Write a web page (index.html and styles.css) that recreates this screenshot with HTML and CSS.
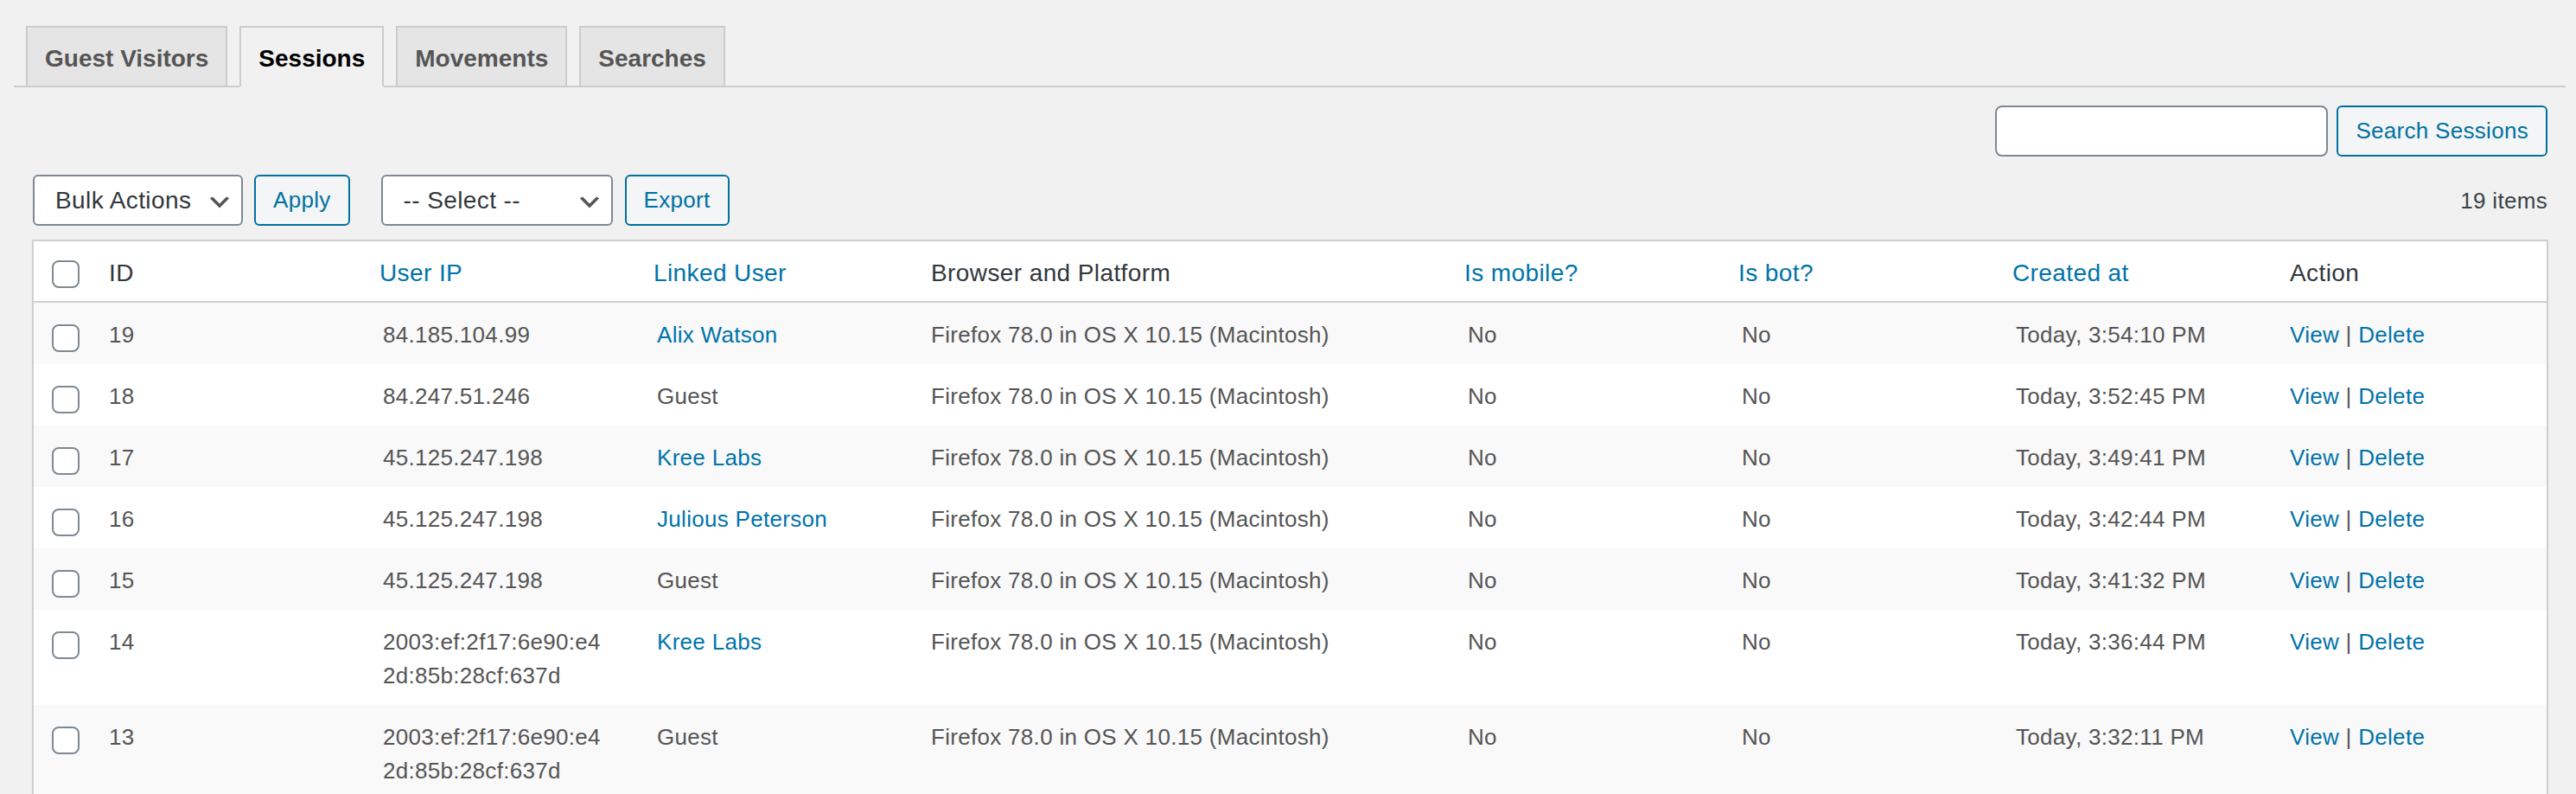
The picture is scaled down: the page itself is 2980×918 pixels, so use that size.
FILE: index.html
```html
<!DOCTYPE html>
<html lang="en">
<head>
<meta charset="utf-8">
<title>Sessions</title>
<link rel="stylesheet" href="styles.css">
</head>
<body>
<div class="page">
  <nav class="tabs">
    <a class="tab">Guest Visitors</a>
    <a class="tab tab-active">Sessions</a>
    <a class="tab">Movements</a>
    <a class="tab">Searches</a>
  </nav>

  <div class="content">
    <div class="search">
      <input class="search-input" type="text">
      <button class="btn">Search Sessions</button>
    </div>

    <div class="toolbar">
      <div class="select select-bulk">
        <span>Bulk Actions</span>
        <svg class="chev" viewBox="0 0 20 20" width="32" height="32"><path d="M5 6l5 5 5-5 2 1-7 7-7-7 2-1z" fill="#555"/></svg>
      </div>
      <button class="btn btn-apply">Apply</button>
      <div class="select select-filter">
        <span>-- Select --</span>
        <svg class="chev" viewBox="0 0 20 20" width="32" height="32"><path d="M5 6l5 5 5-5 2 1-7 7-7-7 2-1z" fill="#555"/></svg>
      </div>
      <button class="btn btn-export">Export</button>
      <span class="count">19 items</span>
    </div>

    <table class="list">
      <colgroup>
        <col class="c-check">
        <col class="c-std">
        <col class="c-std">
        <col class="c-std">
        <col>
        <col class="c-std">
        <col class="c-std">
        <col class="c-std">
        <col class="c-std">
      </colgroup>
      <thead>
        <tr>
          <th class="check"><input type="checkbox" class="cb"></th>
          <th>ID</th>
          <th class="sortable"><a>User IP</a></th>
          <th class="sortable"><a>Linked User</a></th>
          <th>Browser and Platform</th>
          <th class="sortable"><a>Is mobile?</a></th>
          <th class="sortable"><a>Is bot?</a></th>
          <th class="sortable"><a>Created at</a></th>
          <th>Action</th>
        </tr>
      </thead>
      <tbody>
        <tr>
          <td class="check"><input type="checkbox" class="cb"></td>
          <td>19</td><td>84.185.104.99</td><td><a class="link">Alix Watson</a></td>
          <td>Firefox 78.0 in OS X 10.15 (Macintosh)</td><td>No</td><td>No</td>
          <td>Today, 3:54:10 PM</td><td><a class="link">View</a> | <a class="link">Delete</a></td>
        </tr>
        <tr>
          <td class="check"><input type="checkbox" class="cb"></td>
          <td>18</td><td>84.247.51.246</td><td>Guest</td>
          <td>Firefox 78.0 in OS X 10.15 (Macintosh)</td><td>No</td><td>No</td>
          <td>Today, 3:52:45 PM</td><td><a class="link">View</a> | <a class="link">Delete</a></td>
        </tr>
        <tr>
          <td class="check"><input type="checkbox" class="cb"></td>
          <td>17</td><td>45.125.247.198</td><td><a class="link">Kree Labs</a></td>
          <td>Firefox 78.0 in OS X 10.15 (Macintosh)</td><td>No</td><td>No</td>
          <td>Today, 3:49:41 PM</td><td><a class="link">View</a> | <a class="link">Delete</a></td>
        </tr>
        <tr>
          <td class="check"><input type="checkbox" class="cb"></td>
          <td>16</td><td>45.125.247.198</td><td><a class="link">Julious Peterson</a></td>
          <td>Firefox 78.0 in OS X 10.15 (Macintosh)</td><td>No</td><td>No</td>
          <td>Today, 3:42:44 PM</td><td><a class="link">View</a> | <a class="link">Delete</a></td>
        </tr>
        <tr>
          <td class="check"><input type="checkbox" class="cb"></td>
          <td>15</td><td>45.125.247.198</td><td>Guest</td>
          <td>Firefox 78.0 in OS X 10.15 (Macintosh)</td><td>No</td><td>No</td>
          <td>Today, 3:41:32 PM</td><td><a class="link">View</a> | <a class="link">Delete</a></td>
        </tr>
        <tr>
          <td class="check"><input type="checkbox" class="cb"></td>
          <td>14</td><td>2003:ef:2f17:6e90:e4<br>2d:85b:28cf:637d</td><td><a class="link">Kree Labs</a></td>
          <td>Firefox 78.0 in OS X 10.15 (Macintosh)</td><td>No</td><td>No</td>
          <td>Today, 3:36:44 PM</td><td><a class="link">View</a> | <a class="link">Delete</a></td>
        </tr>
        <tr>
          <td class="check"><input type="checkbox" class="cb"></td>
          <td>13</td><td>2003:ef:2f17:6e90:e4<br>2d:85b:28cf:637d</td><td>Guest</td>
          <td>Firefox 78.0 in OS X 10.15 (Macintosh)</td><td>No</td><td>No</td>
          <td>Today, 3:32:11 PM</td><td><a class="link">View</a> | <a class="link">Delete</a></td>
        </tr>
      </tbody>
    </table>
  </div>
</div>
</body>
</html>
```

FILE: styles.css
```css
html, body {
  margin: 0;
  padding: 0;
  background: #f1f1f1;
}
body {
  font-family: "Liberation Sans", Arial, sans-serif;
  font-size: 26px;
  color: #444;
  overflow: hidden;
}
.page {
  padding: 30px 12px 0 16px;
}

/* tabs */
.tabs {
  display: flex;
  gap: 14px;
  padding-left: 14px;
  border-bottom: 2px solid #ccc;
}
.tab {
  display: block;
  border: 2px solid #ccc;
  border-bottom: 0;
  background: #e5e5e5;
  color: #555;
  font-size: 28px;
  font-weight: 700;
  line-height: 48px;
  padding: 12px 20px 7px;
  text-decoration: none;
}
.tab-active {
  background: #f1f1f1;
  color: #000;
  border-bottom: 2px solid #f1f1f1;
  margin-bottom: -2px;
}

/* content */
.content {
  padding: 0 20px 0 21px;
}
.search {
  display: flex;
  justify-content: flex-end;
  gap: 10px;
  margin-top: 21px;
  padding-right: 1px;
}
.search-input {
  box-sizing: border-box;
  width: 385px;
  height: 59px;
  margin: 0;
  border: 2px solid #7e8993;
  border-radius: 8px;
  background: #fff;
}
.btn {
  box-sizing: border-box;
  height: 59px;
  margin: 0;
  padding: 0 20px;
  border: 2px solid #0071a1;
  border-radius: 6px;
  background: #f3f5f6;
  color: #0071a1;
  font-family: "Liberation Sans", Arial, sans-serif;
  font-size: 26px;
  letter-spacing: 0.3px;
  line-height: 55px;
}

.toolbar {
  display: flex;
  align-items: center;
  margin-top: 21px;
  height: 59px;
  padding-left: 1px;
}
.select {
  box-sizing: border-box;
  height: 59px;
  display: flex;
  align-items: center;
  justify-content: space-between;
  padding-left: 24px;
  padding-right: 9px;
  border: 2px solid #7e8993;
  border-radius: 6px;
  background: #fff;
  color: #32373c;
  font-size: 28px;
  letter-spacing: 0.4px;
}
.select span {
  padding-top: 1px;
}
.chev {
  display: block;
  margin-top: 4px;
}
.select-bulk {
  width: 243px;
}
.btn-apply {
  margin-left: 13px;
}
.select-filter {
  width: 268px;
  margin-left: 36px;
}
.btn-export {
  margin-left: 14px;
}
.count {
  margin-left: auto;
  padding-top: 2px;
  padding-right: 1px;
  color: #3c434a;
  letter-spacing: 0.3px;
}

/* table */
.list {
  width: 100%;
  margin-top: 16px;
  table-layout: fixed;
  border-collapse: separate;
  border-spacing: 0;
  border: 2px solid #ccd0d4;
  background: #fff;
  box-shadow: 0 2px 2px rgba(0, 0, 0, 0.04);
}
.c-check { width: 67px; }
.c-std { width: 317px; }

.list th {
  text-align: left;
  font-weight: 400;
  font-size: 28px;
  line-height: 37px;
  letter-spacing: 0.4px;
  color: #32373c;
  padding: 18px 20px 14px;
  border-bottom: 2px solid #ccd0d4;
  vertical-align: top;
}
.list th.sortable {
  padding-left: 16px;
}
.list th a {
  color: #0073aa;
}
.list th.check {
  padding: 22px 0 0 21px;
}

.list td {
  font-size: 26px;
  line-height: 39px;
  letter-spacing: 0.3px;
  color: #555;
  padding: 18px 20px 14px;
  vertical-align: top;
}
.list td.check {
  padding: 25px 0 0 21px;
}
.list tbody tr:nth-child(odd) {
  background: #f9f9f9;
}
.link {
  color: #0073aa;
}

.cb {
  -webkit-appearance: none;
  appearance: none;
  display: block;
  box-sizing: border-box;
  width: 32px;
  height: 32px;
  margin: 0;
  border: 2px solid #7e8993;
  border-radius: 8px;
  background: #fff;
}
```
